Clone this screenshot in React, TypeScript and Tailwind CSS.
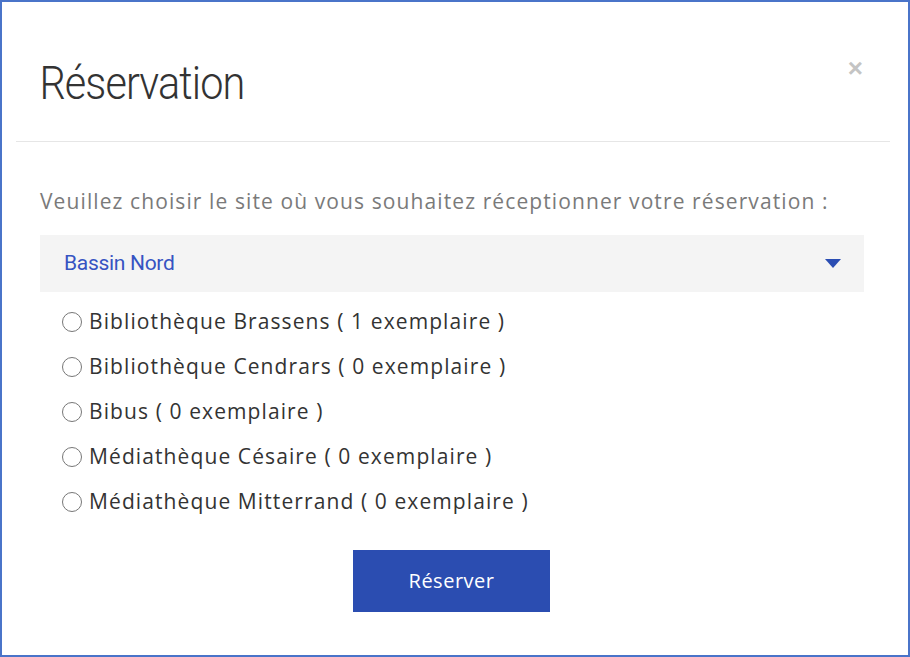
import React from "react";

const sites = [
  "Bibliothèque Brassens ( 1 exemplaire )",
  "Bibliothèque Cendrars ( 0 exemplaire )",
  "Bibus ( 0 exemplaire )",
  "Médiathèque Césaire ( 0 exemplaire )",
  "Médiathèque Mitterrand ( 0 exemplaire )",
];

export default function App() {
  return (
    <div className="w-[910px] h-[657px] bg-white">
      <div className="h-full w-full border-2 border-[#4a74c9] bg-white flex flex-col">
        {/* header */}
        <div className="relative ml-[14px] mr-[18px] h-[140px] border-b border-[#e6e6e6] flex items-center">
          <h1
            className="pl-[26px] pt-[22px] text-[46px] leading-none text-[#333] tracking-[-1px] origin-left scale-x-[0.9]"
            style={{ fontFamily: '"Roboto", sans-serif', fontWeight: 300 }}
          >
            Réservation
          </h1>
          <span
            className="absolute right-[27px] top-[47px] text-[26px] font-bold text-[#c4c4c4]"
            style={{ fontFamily: '"Liberation Sans", sans-serif' }}
          >
            ×
          </span>
        </div>

        {/* body */}
        <div className="px-[38px] pt-[45px]" style={{ fontFamily: '"Open Sans", sans-serif' }}>
          <p className="text-[21px] leading-[28px] text-[#7a7a7a] tracking-[1.1px] whitespace-nowrap">
            Veuillez choisir le site où vous souhaitez réceptionner votre réservation :
          </p>

          <div className="mt-[20px] mr-[6px] h-[57px] bg-[#f4f4f4] flex items-center justify-between pl-[24px] pr-[23px]">
            <span
              className="text-[21px] text-[#3653c2] tracking-[-0.3px]"
              style={{ fontFamily: '"Roboto", sans-serif' }}
            >
              Bassin Nord
            </span>
            <svg width="16" height="9" viewBox="0 0 16 9">
              <path d="M0 0 H16 L8 9 Z" fill="#2a4db3" />
            </svg>
          </div>

          <div className="mt-[7px] pl-[22px] flex flex-col">
            {sites.map((s) => (
              <label key={s} className="h-[45px] flex items-center gap-[7px] text-[21px] tracking-[1.1px] text-[#333]">
                <span className="w-[20px] h-[20px] rounded-full border border-[#777] bg-white shrink-0" />
                <span>{s}</span>
              </label>
            ))}
          </div>

          <div className="mt-[26px] mr-[7px] flex justify-center">
            <button className="w-[197px] h-[62px] bg-[#2b4db1] text-white text-[20px] tracking-[0.5px]">Réserver</button>
          </div>
        </div>
      </div>
    </div>
  );
}
